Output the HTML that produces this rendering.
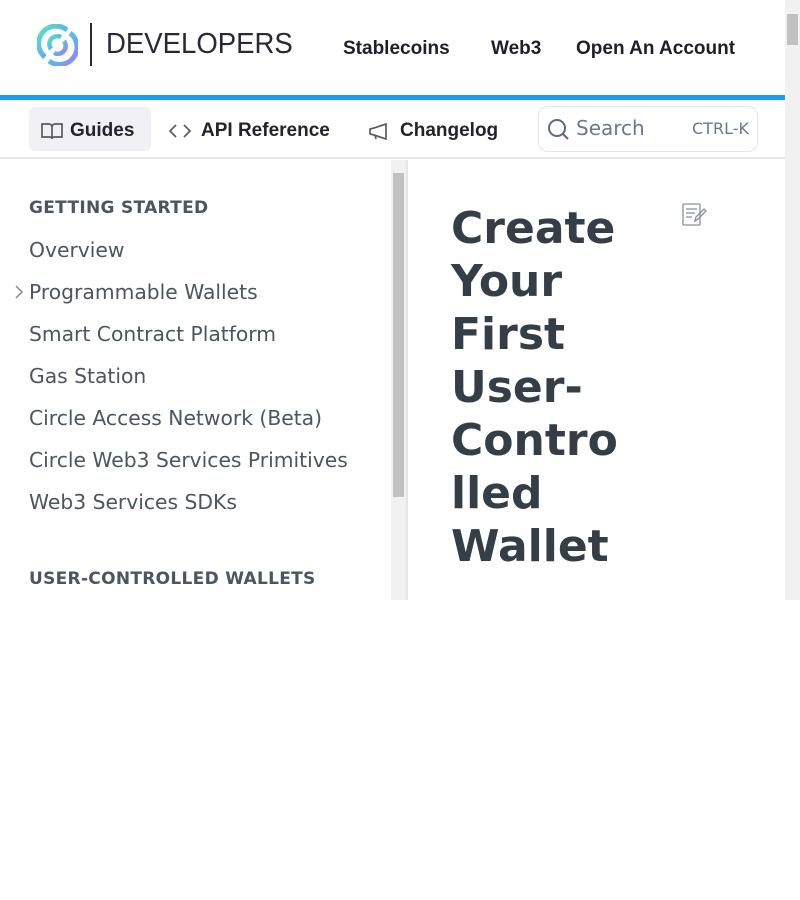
<!DOCTYPE html>
<html><head><style>
*{margin:0;padding:0;box-sizing:border-box}
body{width:800px;height:900px;background:#fff;font-family:"DejaVu Sans",sans-serif;position:relative;overflow:hidden}
.hdr{position:absolute;left:0;top:0;width:785px;height:95px;background:#fff}
.blue{position:absolute;left:0;top:95px;width:785px;height:5px;background:#1a9cf0}
.nav{position:absolute;top:38px;font-family:"Liberation Sans",sans-serif;font-weight:bold;font-size:19px;color:#1f1d2e}
.sub{position:absolute;left:0;top:100px;width:785px;height:59px;border-bottom:2px solid #e5e5e5}
.tab{position:absolute;top:7px;height:44px;padding-top:3px;font-family:"Liberation Sans",sans-serif;font-weight:bold;font-size:19px;color:#24222f;display:flex;align-items:center}
.search{position:absolute;left:538px;top:6px;width:220px;height:46px;border:1.5px solid #e2e4e8;border-radius:10px}
.vsb{position:absolute;left:785px;top:0;width:15px;height:600px;background:#f1f1f1}
.side{position:absolute;left:0;top:160px;width:391px;height:440px;overflow:hidden}
.side .h{position:absolute;left:29px;font-size:17px;font-weight:bold;color:#4b5563;letter-spacing:.3px}
.side .i{position:absolute;left:29px;font-size:20.3px;color:#4b5563}
.ssb{position:absolute;left:391px;top:160px;width:15px;height:440px;background:#f1f1f1}
.title{position:absolute;left:451px;top:202px;font-size:44px;font-weight:bold;line-height:53px;color:#353e47}
</style></head><body>
<div class="hdr">
<svg style="position:absolute;left:37px;top:24px" width="41" height="42" viewBox="0 0 41 42">
<defs><linearGradient id="g" x1="0" y1="0" x2="1" y2="1"><stop offset="0" stop-color="#5ee6b0"/><stop offset=".5" stop-color="#5bb8f0"/><stop offset="1" stop-color="#a37cf0"/></linearGradient></defs>
<path d="M8 33 A17 17 0 0 1 30 6" fill="none" stroke="url(#g)" stroke-width="5"/>
<path d="M33 9 A17 17 0 0 1 12 37" fill="none" stroke="url(#g)" stroke-width="5"/>
<path d="M14 25 A8 8 0 0 1 24 13" fill="none" stroke="url(#g)" stroke-width="4.5"/>
<path d="M27 17 A8 8 0 0 1 17 29" fill="none" stroke="url(#g)" stroke-width="4.5"/>
</svg>
<div style="position:absolute;left:90px;top:23px;width:2px;height:43px;background:#2a2838"></div>
<div style="position:absolute;left:106px;top:28px;font-family:'Liberation Sans',sans-serif;font-size:29px;color:#2a2838;transform:scaleX(.95);transform-origin:left">DEVELOPERS</div>
<div class="nav" style="left:343px">Stablecoins</div>
<div class="nav" style="left:491px">Web3</div>
<div class="nav" style="left:576px">Open An Account</div>
</div>
<div class="blue"></div>
<div class="sub">
<div class="tab" style="left:29px;width:122px;background:#f0f0f5;border-radius:6px;padding-left:11px">
<svg width="24" height="20" viewBox="0 0 24 20" fill="none" stroke="#5a5a66" stroke-width="1.7"><path d="M2 3h7a3 3 0 0 1 3 3v12a2 2 0 0 0-2-2H2z M22 3h-7a3 3 0 0 0-3 3v12a2 2 0 0 1 2-2h8z"/></svg>
<span style="margin-left:6px">Guides</span></div>
<div class="tab" style="left:169px">
<svg width="22" height="16" viewBox="0 0 22 16" fill="none" stroke="#5a5a66" stroke-width="1.7"><path d="M7 2 1 8l6 6M15 2l6 6-6 6"/></svg>
<span style="margin-left:10px">API Reference</span></div>
<div class="tab" style="left:368px">
<svg width="22" height="20" viewBox="0 0 22 20" fill="none" stroke="#5a5a66" stroke-width="1.7"><path d="M2 8v5l4 1 12 4V3L6 7z M7 14l1 4"/></svg>
<span style="margin-left:10px">Changelog</span></div>
<div class="search">
<svg style="position:absolute;left:8px;top:11px" width="23" height="23" viewBox="0 0 23 23" fill="none" stroke="#5b6b85" stroke-width="2"><circle cx="10" cy="10" r="8"/><path d="M16 16l5 5"/></svg>
<span style="position:absolute;left:37px;top:9px;font-size:20px;color:#6b7890">Search</span>
<span style="position:absolute;left:153px;top:12px;font-size:16px;color:#6b7890">CTRL-K</span>
</div>
</div>
<div class="side">
<div class="h" style="top:38px">GETTING STARTED</div>
<div class="i" style="top:78px">Overview</div>
<svg style="position:absolute;left:14px;top:125px" width="9" height="14" viewBox="0 0 9 14" fill="none" stroke="#888" stroke-width="1.5"><path d="M2 1l6 6-6 6"/></svg>
<div class="i" style="top:120px">Programmable Wallets</div>
<div class="i" style="top:162px">Smart Contract Platform</div>
<div class="i" style="top:204px">Gas Station</div>
<div class="i" style="top:246px">Circle Access Network (Beta)</div>
<div class="i" style="top:288px">Circle Web3 Services Primitives</div>
<div class="i" style="top:330px">Web3 Services SDKs</div>
<div class="h" style="top:409px">USER-CONTROLLED WALLETS</div>
</div>
<div class="ssb"><div style="position:absolute;left:2px;top:13px;width:11px;height:324px;background:#c1c1c1"></div></div>
<div style="position:absolute;left:406px;top:160px;width:2px;height:440px;background:#e5e5e5"></div>
<div class="title">Create<br>Your<br>First<br>User-<br>Contro<br>lled<br>Wallet</div>
<svg style="position:absolute;left:682px;top:203px" width="25" height="23" viewBox="0 0 25 23" fill="none" stroke="#8590a6" stroke-width="1.3"><rect x="1" y="1" width="17" height="21" rx="1"/><path d="M4 6h11M4 10h9M4 14h6M13 18l1-4 8-8 2 2-8 8z"/></svg>
<div class="vsb"><div style="position:absolute;left:2px;top:14px;width:11px;height:31px;background:#c1c1c1"></div></div>
</body></html>
